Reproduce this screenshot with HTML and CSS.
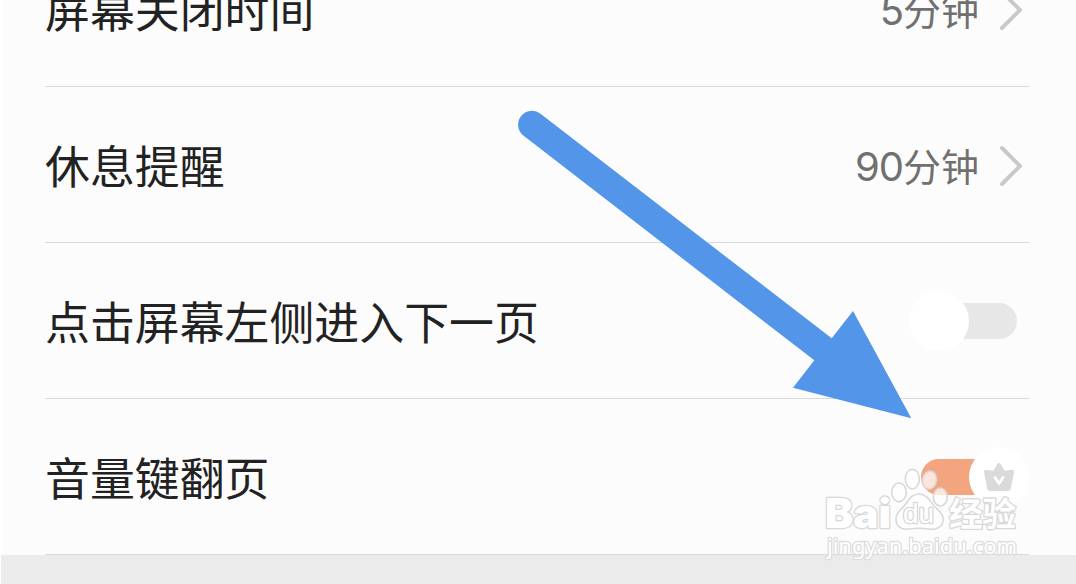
FILE: index.html
```html
<!DOCTYPE html>
<html lang="zh-CN">
<head>
    <meta charset="UTF-8">
    <meta name="viewport" content="width=device-width, initial-scale=1.0">
    <title>阅读设置</title>
    <link rel="stylesheet" href="styles.css">
</head>
<body>

    <!-- Settings list -->
    <main class="settings">
        <div class="row">
            <span class="label">屏幕关闭时间</span>
            <span class="value"><span class="num">5</span>分钟</span>
            <svg class="chevron" width="26" height="42" viewBox="0 0 26 42"><path d="M4 3L22 21L4 39"/></svg>
        </div>
        <div class="row">
            <span class="label">休息提醒</span>
            <span class="value"><span class="num">90</span>分钟</span>
            <svg class="chevron" width="26" height="42" viewBox="0 0 26 42"><path d="M4 3L22 21L4 39"/></svg>
        </div>
        <div class="row">
            <span class="label">点击屏幕左侧进入下一页</span>
            <div class="switch"><div class="knob"></div></div>
        </div>
        <div class="row">
            <span class="label">音量键翻页</span>
            <div class="switch on">
                <div class="knob">
                    <svg width="30" height="28" viewBox="0 0 30 28">
                        <path class="crown" d="M13.2 1.2Q15 -1 16.8 1.2L20.5 7.8L28 6.8Q30.3 7 30 9.3L26.7 26Q26.3 28 24 28H6Q3.7 28 3.3 26L0 9.3Q-.3 7 2 6.8L9.5 7.8Z"/>
                        <path class="tick" d="M11 14.5L15 20.5L19 14.5"/>
                    </svg>
                </div>
            </div>
        </div>
    </main>

    <!-- Pointer arrow -->
    <svg class="arrow" width="1076" height="584" viewBox="0 0 1076 584">
        <path d="M540.5 113.8L831.7 338.3L853 311L911.3 418.3L793 387.8L814.3 360.3L523.3 135.5A13.7 13.7 0 0 1 540.5 113.8Z"/>
    </svg>

    <!-- Watermark -->
    <svg class="watermark" width="220" height="110" viewBox="820 460 220 110">
        <g class="mark">
            <ellipse cx="899" cy="492.3" rx="7.3" ry="9.3"/>
            <ellipse cx="912.3" cy="479" rx="7" ry="9.7"/>
            <ellipse cx="929.5" cy="480" rx="7" ry="9" transform="rotate(10 929.5 480)"/>
            <ellipse cx="940.3" cy="497" rx="7" ry="9"/>
            <path d="M919 494C927 494 930 501 934 506C939 511 944 514 943 521C942 528 935 530 929 529Q919 527.5 909 529C902 530 896 527 896 519C896 512 901 510 905 505C909 500 911 494 919 494Z"/>
            <text class="bai" x="825" y="528" textLength="66" lengthAdjust="spacingAndGlyphs">Bai</text>
            <text class="du" x="903" y="523" textLength="31" lengthAdjust="spacingAndGlyphs">du</text>
            <text class="exp" x="949" y="525.5" textLength="67">经验</text>
            <text class="url" x="827" y="554" textLength="190" lengthAdjust="spacingAndGlyphs">jingyan.baidu.com</text>
        </g>
    </svg>

</body>
</html>
```
FILE: styles.css
```css
body {
    font-family: "Noto Sans CJK SC", sans-serif;
    background-color: #ebebeb;
    margin: 0;
    height: 584px;
    overflow: hidden;
    display: flow-root;
    border-left: 1px solid #fff;
    box-sizing: border-box;
}
.settings {
    margin-top: -69px;
    padding: 0 47px 0 44px;
    background-color: #fcfcfc;
}
.row {
    display: flex;
    align-items: center;
    height: 156px;
    box-sizing: border-box;
    border-bottom: 1px solid #dadada;
}
.label {
    flex: 1;
    font-size: 44.9px;
    line-height: 64px;
    color: #222;
}
.value {
    margin-top: 3px;
    font-size: 38px;
    line-height: 56px;
    color: #707070;
}
.num {
    font-family: Inter, sans-serif;
    font-size: 40px;
    letter-spacing: -1px;
}
.chevron {
    margin-left: 19px;
    margin-right: 5px;
    margin-top: 3px;
}
.chevron path {
    fill: none;
    stroke: #c9c9c9;
    stroke-width: 4;
    stroke-linecap: round;
    stroke-linejoin: round;
}
.switch {
    display: flex;
    align-items: center;
    width: 96px;
    height: 36px;
    margin-right: 12px;
    border-radius: 18px;
    background-color: #e7e7e7;
}
.switch .knob {
    display: flex;
    align-items: center;
    justify-content: center;
    flex: none;
    width: 60px;
    height: 60px;
    margin-left: -12px;
    border-radius: 50%;
    background-color: #fff;
}
.switch.on {
    background-color: #f2a57e;
}
.switch.on .knob {
    margin-left: 48px;
}
.crown {
    fill: #dadada;
}
.tick {
    fill: none;
    stroke: #fff;
    stroke-width: 2.8;
    stroke-linecap: round;
    stroke-linejoin: round;
}
.arrow {
    position: absolute;
    top: 0;
    left: 0;
    fill: #5395e9;
}
.watermark {
    position: absolute;
    top: 460px;
    left: 820px;
}
.mark {
    fill: rgba(255, 255, 255, 0.72);
    stroke: #d8d8d8;
    stroke-width: 1.6;
}
.mark text {
    fill: #fff;
    stroke-width: 2.6;
    paint-order: stroke;
    stroke-linejoin: round;
}
.mark .bai {
    font: 900 41px Inter, sans-serif;
}
.mark .du {
    font: 27px "Liberation Sans", sans-serif;
}
.mark .exp {
    font: bold 33.5px "Noto Sans CJK SC", sans-serif;
}
.mark .url {
    font: 22px "Noto Sans", sans-serif;
    stroke: #dcdcdc;
}
```
